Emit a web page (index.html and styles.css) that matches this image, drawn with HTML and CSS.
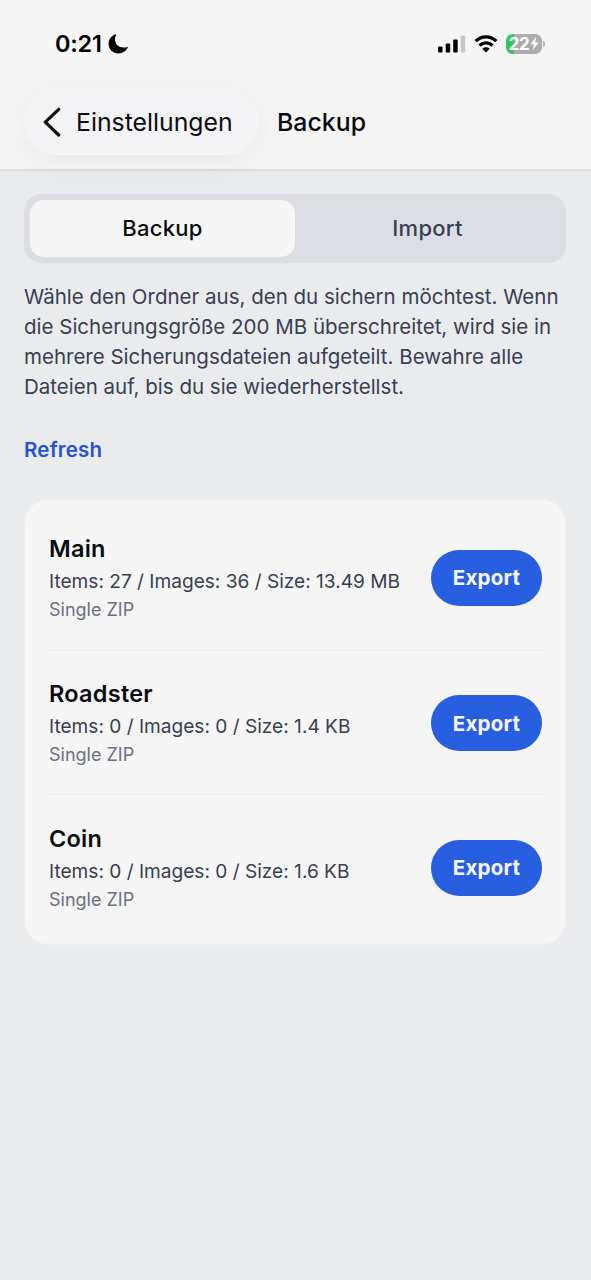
FILE: index.html
```html
<!DOCTYPE html>
<html lang="de">
<head>
<meta charset="utf-8">
<meta name="viewport" content="width=device-width, initial-scale=1">
<title>Backup</title>
<link rel="stylesheet" href="styles.css">
</head>
<body>
<div class="screen">
  <header class="header">
    <div class="status">
      <div class="clock">
        <span class="time">0:21</span>
        <svg class="moon" width="20" height="20" viewBox="0 0 20 20"><path d="M7.800.3C3.600 1.600.6 5.200.6 9.700c0 5.500 4.300 9.700 9.800 9.700 4.100 0 7.600-2.300 9.300-5.900.2-.5-.1-.8-.6-.6-1 .4-2.200.6-3.400.6-5.300 0-8.700-3.300-8.700-8.500 0-1.500.4-3 1.200-4.100.3-.4.100-.8-.4-.6z"/></svg>
      </div>
      <div class="indicators">
        <svg width="28" height="18" viewBox="0 0 28 18"><rect x="0" y="11.500" width="4.500" height="6" rx="1.100"/><rect x="7.700" y="8.500" width="4.500" height="9" rx="1.100"/><rect x="15.200" y="4.500" width="4.500" height="13" rx="1.100"/><rect class="faint" x="22.700" y="0.500" width="4.500" height="17" rx="1.100"/></svg>
        <svg class="wifi" width="24" height="18" viewBox="0 0 24 18"><path class="arc" d="M1.700 6.200C7.400.5 16.600.5 22.300 6.200M5.500 10.500c3.700-3.500 9.300-3.500 13 0"/><path d="M8.300 13.700c2.300-1.900 5.100-1.900 7.400 0L12 17.500z"/></svg>
        <div class="battery"><span class="charge">22</span><svg width="9" height="15" viewBox="0 0 9 15"><path d="M6.200.7.300 8.200h3.500L2.600 14.200 8.700 6.500H5.200z"/></svg></div>
        <span class="cap"></span>
      </div>
    </div>
    <nav class="nav">
      <a class="back"><svg width="18" height="30" viewBox="0 0 18 30"><path d="M15.700 2.300 2.300 15.200 15.700 28"/></svg><span class="back-label">Einstellungen</span></a>
      <h1 class="title">Backup</h1>
    </nav>
  </header>
  <main class="content">
    <div class="tabs"><button class="tab active">Backup</button><button class="tab">Import</button></div>
    <p class="intro">Wähle den Ordner aus, den du sichern möchtest. Wenn<br>die Sicherungsgröße 200 MB überschreitet, wird sie in<br>mehrere Sicherungsdateien aufgeteilt. Bewahre alle<br>Dateien auf, bis du sie wiederherstellst.</p>
    <a class="refresh">Refresh</a>
    <section class="card">
      <article class="row"><div class="info"><h2 class="name">Main</h2><p class="stats">Items: 27 / Images: 36 / Size: 13.49 MB</p><p class="kind">Single ZIP</p></div><button class="export">Export</button></article>
      <article class="row"><div class="info"><h2 class="name">Roadster</h2><p class="stats">Items: 0 / Images: 0 / Size: 1.4 KB</p><p class="kind">Single ZIP</p></div><button class="export">Export</button></article>
      <article class="row"><div class="info"><h2 class="name">Coin</h2><p class="stats">Items: 0 / Images: 0 / Size: 1.6 KB</p><p class="kind">Single ZIP</p></div><button class="export">Export</button></article>
    </section>
  </main>
</div>
</body>
</html>
```
FILE: styles.css
```css
* { box-sizing: border-box; }
body { margin: 0; background: #eaebed; font-family: Inter, "Liberation Sans", sans-serif; color: #0b0c10; }
h1, h2, p { margin: 0; font-weight: 400; }
button { border: 0; padding: 0; font: inherit; color: inherit; }
.screen { min-height: 1280px; background: linear-gradient(90deg, #e8eaec 0, #eaebed 40px, #eaebed 100%); }
.header { height: 171px; background: #f5f5f5; border-bottom: 2px solid #dcddde; }
.status { height: 89px; padding: 0 46px 0 55px; display: flex; justify-content: space-between; align-items: center; }
.clock { display: flex; align-items: center; gap: 6px; margin-bottom: 1px; }
.time { font-size: 23.500px; font-weight: 600; letter-spacing: -0.200px; line-height: 28px; color: #000; }
.moon { margin-bottom: 1px; }
.indicators { display: flex; align-items: center; margin-bottom: 2px; }
.faint { fill: #c5c5c5; }
.wifi { margin: 0 8px; }
.arc { fill: none; stroke: #000; stroke-width: 3.200; }
.battery { width: 36px; height: 20px; border-radius: 6.500px; background: linear-gradient(90deg, #34c759 8.500px, #adadad 8.500px); display: flex; align-items: center; justify-content: center; gap: 1px; color: #fff; fill: #fff; }
.charge { font-size: 17px; font-weight: 700; line-height: 20px; letter-spacing: -0.500px; }
.cap { width: 2px; height: 6px; margin-left: 1px; border-radius: 0 2px 2px 0; background: #b0b0b0; }
.nav { display: flex; align-items: center; gap: 18px; padding-left: 24px; }
.back { width: 235px; height: 66px; padding-left: 18px; display: flex; align-items: center; gap: 15px; border-radius: 33px; background: #f3f3f5; border: 1px solid #f6f6f7; box-shadow: 0 6px 34px rgba(0,0,0,.06); }
.back svg { fill: none; stroke: #111; stroke-width: 3.200; stroke-linecap: round; stroke-linejoin: round; }
.back-label { font-size: 24.800px; line-height: 30px; }
.title { font-size: 24.800px; font-weight: 500; line-height: 30px; letter-spacing: 0.050px; }
.content { padding: 23px 25px 0 24px; }
.tabs { height: 69px; padding: 6px; display: grid; grid-template-columns: 1fr 1fr; border-radius: 18px; background: #dddee3; }
.tab { background: none; border-radius: 14px; padding-bottom: 2px; font-size: 22px; font-weight: 500; letter-spacing: 0.250px; color: #384152; }
.active { background: #f5f5f5; color: #0b0c10; }
.intro { margin-top: 19px; font-size: 20.500px; line-height: 30px; color: #384051; white-space: nowrap; }
.refresh { display: block; margin-top: 33px; font-size: 20.500px; font-weight: 600; line-height: 30px; letter-spacing: 0.200px; color: #2454d3; }
.card { margin-top: 34px; height: 446px; padding: 5px 23px 0 24px; border-radius: 24px; background: #f5f5f5; border: 1px solid #eeeff0; }
.row { height: 144.700px; display: flex; align-items: center; justify-content: space-between; }
.row + .row { border-top: 1px solid #e9eaeb; }
.info { white-space: nowrap; }
.name { font-size: 23.500px; font-weight: 600; line-height: 33px; letter-spacing: 0.250px; }
.stats { font-size: 19.100px; line-height: 32px; color: #384051; }
.kind { font-size: 18px; line-height: 26px; color: #6a7180; }
.export { width: 111px; height: 56px; margin-top: 1px; border-radius: 28px; background: #285fe0; color: #f7f9ff; font-size: 20.500px; font-weight: 700; letter-spacing: 0.250px; }
```
